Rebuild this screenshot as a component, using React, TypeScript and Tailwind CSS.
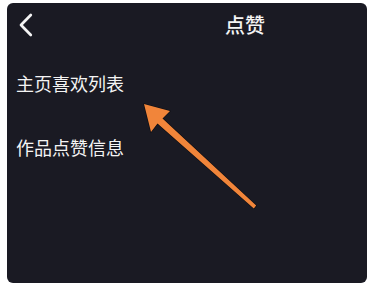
import React from "react";

const items = ["主页喜欢列表", "作品点赞信息"];

const App = () => {
  return (
    <div
      className="relative w-[376px] h-[289px] bg-white overflow-hidden"
      style={{ fontFamily: '"Noto Sans CJK SC", "Noto Sans", sans-serif' }}
    >
      {/* dark settings panel */}
      <div className="ml-[7px] mt-[3px] w-[360px] h-[280px] rounded-[6px] bg-[#1a1a23] text-[#f4f4f4]">
        {/* header */}
        <div className="relative h-[44px] flex items-center">
          <svg className="ml-[11px]" width="16" height="25" viewBox="0 0 16 25" fill="none">
            <path d="M12.8 2 L3 12 L12.8 22" stroke="#f4f4f4" strokeWidth="2.7" strokeLinecap="round" strokeLinejoin="round" />
          </svg>
          <span className="ml-[191px] text-[20px] leading-none font-medium">点赞</span>
        </div>

        {/* list */}
        <div className="pt-[4px] pl-[9px]">
          {items.map((t) => (
            <div key={t} className="h-[64px] flex items-center text-[18px] leading-none">
              {t}
            </div>
          ))}
        </div>
      </div>

      {/* orange pointer arrow */}
      <svg className="absolute left-0 top-0 pointer-events-none" width="376" height="289" viewBox="0 0 376 289">
        <polygon
          points="144,104 170,111 162.5,118.4 256.2,205.6 253.8,208.4 157.5,123.6 151,132"
          fill="#f1853a"
          stroke="#0c0c10"
          strokeWidth="1.2"
          strokeLinejoin="round"
          style={{ paintOrder: "stroke" }}
        />
      </svg>
    </div>
  );
};

export default App;
